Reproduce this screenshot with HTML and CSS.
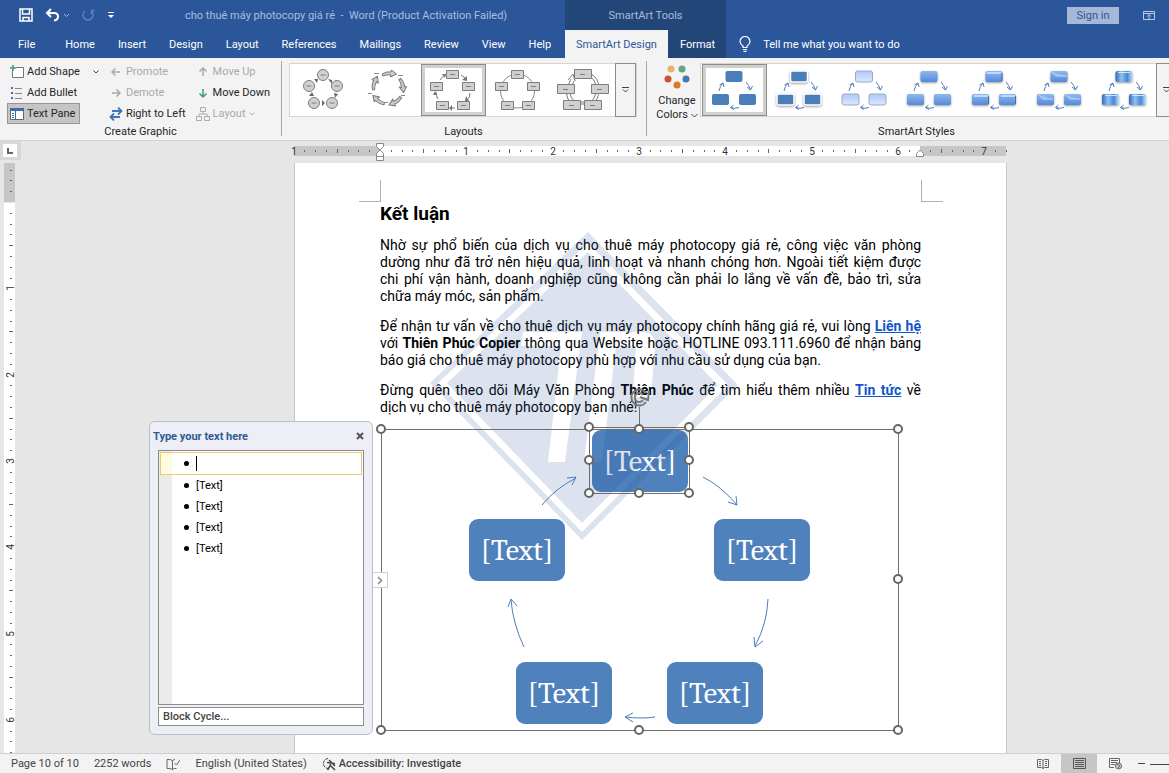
FILE: index.html
```html
<!DOCTYPE html>
<html lang="vi">
<head>
  <meta charset="UTF-8" />
  <meta name="viewport" content="width=device-width, initial-scale=1" />
  <title>cho thuê máy photocopy giá rẻ - Word</title>
  <link rel="stylesheet" href="styles.css">
</head>
<body>
  <!-- shared shapes -->
  <svg class="defs" width="0" height="0" aria-hidden="true">
    <defs>
      <linearGradient id="g-pale" x1="0" y1="0" x2="0" y2="1"><stop offset="0" stop-color="#aec8f8"/><stop offset="1" stop-color="#dde8fd"/></linearGradient>
      <linearGradient id="g-mid" x1="0" y1="0" x2="0" y2="1"><stop offset="0" stop-color="#8fb8f2"/><stop offset="1" stop-color="#5489d8"/></linearGradient>
      <linearGradient id="g-side" x1="0" y1="0" x2="1" y2="0"><stop offset="0" stop-color="#2f6cb8"/><stop offset=".35" stop-color="#8fc0f5"/><stop offset=".7" stop-color="#4a86d6"/><stop offset="1" stop-color="#bfe0fb"/></linearGradient>
      <g id="style-arrows" fill="none" stroke="#4c7db8" stroke-width="1">
        <path d="M17 26Q18 21 21 18M17.500 20l3.500-2 1 4"/>
        <path d="M44 17Q47 20 48.500 25M45 22l3.500 3 2-4"/>
        <path d="M37 42.500Q33 44 28.500 42.500M31.500 40l-3 2.500 3.500 2"/>
      </g>
      <g id="style-boxes">
        <rect x="23.500" y="6" width="17" height="11" rx="2"/>
        <rect x="10" y="29" width="17" height="11" rx="2"/>
        <rect x="37" y="29" width="17" height="11" rx="2"/>
      </g>
      <g id="cycle-boxes" fill="#d0d0d0" stroke="#7d7d7d">
        <path d="M25.500 5.500h12v8h-12zM9.500 17.500h12v8h-12zM41.500 17.500h12v8h-12zM15.500 36.500h12v8h-12zM36.500 36.500h12v8h-12z"/>
        <path d="M29 9.500h5M13 21.500h5M45 21.500h5M19 40.500h5M40 40.500h5"/>
      </g>
      <path id="block-arrow" d="M-7 1q5-3 9-2l.5-2 5 4-6 3 .5-2q-4-1-8 1z" fill="#ccc" stroke="#777"/>
    </defs>
  </svg>

  <header class="header">
    <div class="quick-access">
      <button class="icon-btn" aria-label="Save">
        <svg width="14" height="14" viewBox="0 0 14 14" fill="none" stroke="#fff" stroke-width="1.500"><path d="M1 1h12v12H1zM3.500 1v5h7V1M4 13V9.500h6V13"/></svg>
      </button>
      <button class="icon-btn" aria-label="Undo">
        <svg width="24" height="14" viewBox="0 0 24 14" fill="none" stroke="#fff"><path stroke-width="2" d="M6 1L2 5l4 4M2 5h7q4 0 4 3.500T9 12.500"/><path stroke="#9db3d8" d="M19 6l2.500 2.500L24 6"/></svg>
      </button>
      <button class="icon-btn" aria-label="Repeat" disabled>
        <svg width="14" height="14" viewBox="0 0 14 14" fill="none" stroke="#5d80b9" stroke-width="1.500"><path d="M4 3a5 5 0 1 0 6 0M10.500 6V2.500h3"/></svg>
      </button>
      <button class="icon-btn" aria-label="Customize Quick Access Toolbar">
        <svg width="8" height="8" viewBox="0 0 8 8" fill="#fff"><path d="M1 1h6v1H1zM1 4h6L4 7z"/></svg>
      </button>
      <span class="doc-title">cho thuê máy photocopy giá rẻ&nbsp; -&nbsp; Word (Product Activation Failed)</span>
    </div>
    <div class="context-title">SmartArt Tools</div>
    <div class="account">
      <button class="sign-in">Sign in</button>
      <button class="icon-btn" aria-label="Ribbon Display Options">
        <svg width="12" height="9" viewBox="0 0 12 9" fill="none" stroke="#b9c9e4"><path d="M.5.500h11v8H.5zM.5 2.500h11M6 8V4M4 5.500l2-2 2 2"/></svg>
      </button>
    </div>
    <nav class="tabs">
      <a class="tab tab-file" href="#">File</a>
      <a class="tab" href="#">Home</a>
      <a class="tab" href="#">Insert</a>
      <a class="tab" href="#">Design</a>
      <a class="tab" href="#">Layout</a>
      <a class="tab" href="#">References</a>
      <a class="tab" href="#">Mailings</a>
      <a class="tab" href="#">Review</a>
      <a class="tab" href="#">View</a>
      <a class="tab" href="#">Help</a>
    </nav>
    <nav class="tabs tabs-context">
      <a class="tab active" href="#">SmartArt Design</a>
      <a class="tab" href="#">Format</a>
    </nav>
    <a class="tell-me" href="#">
      <svg width="12" height="16" viewBox="0 0 12 16" fill="none" stroke="#fff" stroke-width="1.200"><path d="M4 11.500V10Q1 8 1 5.500a5 5 0 0 1 10 0Q11 8 8 10v1.500zM4 13.500h4M4.500 15.300h3"/></svg>
      Tell me what you want to do
    </a>
  </header>

  <section class="ribbon">
    <div class="group group-create">
      <div class="group-body commands">
        <div class="command-col">
          <button class="command">
            <svg width="14" height="14" viewBox="0 0 14 14" fill="none"><path d="M2.500 5v7.500h11v-10H6" fill="#fff" stroke="#777"/><path d="M3 0v6M0 3h6" stroke="#3f9c78" stroke-width="1.500"/></svg>
            Add Shape
            <svg class="drop" width="6" height="4" viewBox="0 0 6 4" fill="none" stroke="#444"><path d="M.5.500L3 3 5.500.500"/></svg>
          </button>
          <button class="command">
            <svg width="14" height="14" viewBox="0 0 14 14"><path fill="#41719c" d="M1 1h2v2H1zM1 6h2v2H1zM1 11h2v2H1z"/><path stroke="#888" d="M5 2.500h7M5 7.500h7M5 12.500h7"/></svg>
            Add Bullet
          </button>
          <button class="command pressed" aria-pressed="true">
            <svg width="14" height="14" viewBox="0 0 14 14"><path fill="#fff" stroke="#666" d="M.5 1.500h13v11H.5z"/><path fill="#3a6ea5" d="M0 1h14v3H0z"/><path stroke="#3a6ea5" d="M2 6.500h2M2 8.500h2M2 10.500h2M5.500 4v9"/></svg>
            Text Pane
          </button>
        </div>
        <div class="command-col">
          <button class="command" disabled><svg width="14" height="12" viewBox="0 0 14 12" fill="none" stroke="#aaa" stroke-width="1.500"><path d="M11 6H3M6.500 2.500L3 6l3.500 3.500"/></svg>Promote</button>
          <button class="command" disabled><svg width="14" height="12" viewBox="0 0 14 12" fill="none" stroke="#aaa" stroke-width="1.500"><path d="M3 6h8M7.500 2.500L11 6 7.500 9.500"/></svg>Demote</button>
          <button class="command"><svg width="14" height="14" viewBox="0 0 14 14" fill="none" stroke="#3d77b5" stroke-width="1.800"><path d="M3 4h9M9 .500L12.500 4 9 7.500M11 10H2M5 6.500L1.500 10 5 13.500"/></svg>Right to Left</button>
        </div>
        <div class="command-col">
          <button class="command" disabled><svg width="14" height="12" viewBox="0 0 14 12" fill="none" stroke="#aaa" stroke-width="1.500"><path d="M7 10V2.500M3.500 5.500L7 2l3.500 3.500"/></svg>Move Up</button>
          <button class="command"><svg width="14" height="12" viewBox="0 0 14 12" fill="none" stroke="#3f9c78" stroke-width="1.500"><path d="M7 2v7.500M3.500 6.500L7 10l3.500-3.500"/></svg>Move Down</button>
          <button class="command" disabled><svg width="14" height="14" viewBox="0 0 14 14" fill="none" stroke="#aaa"><path d="M4.500.500h5v4h-5zM.5 9.500h5v4h-5zM8.500 9.500h5v4h-5zM7 4.500V7M3 9.500V7h8v2.500"/></svg>Layout<svg width="6" height="4" viewBox="0 0 6 4" fill="none" stroke="#aaa"><path d="M.5.500L3 3 5.500.500"/></svg></button>
        </div>
      </div>
      <div class="group-label">Create Graphic</div>
    </div>

    <div class="group group-layouts">
      <div class="group-body">
        <div class="gallery">
          <button class="thumb" aria-label="Basic Cycle">
            <svg width="61" height="48" viewBox="2 1 61 48"><g fill="#d0d0d0" stroke="#7d7d7d"><circle cx="32" cy="10" r="5.500"/><circle cx="18" cy="21" r="5.500"/><circle cx="46" cy="21" r="5.500"/><circle cx="23" cy="38" r="5.500"/><circle cx="41" cy="38" r="5.500"/><path d="M29.500 10h5M15.500 21h5M43.500 21h5M20.500 38h5M38.500 38h5"/></g><path fill="#666" d="M23 14l4 0-1 4zM37 14l4 1 0 4zM43 28l4 1-3 4zM34 38l-3-3v6zM18 31l3-4 2 4z"/></svg>
          </button>
          <button class="thumb" aria-label="Text Cycle">
            <svg width="61" height="48" viewBox="2 1 61 48"><use href="#block-arrow" x="33" y="8"/><use href="#block-arrow" transform="translate(47 20) rotate(78)"/><use href="#block-arrow" transform="translate(40 37) rotate(150)"/><use href="#block-arrow" transform="translate(22 36) rotate(220)"/><use href="#block-arrow" transform="translate(18 18) rotate(290)"/><path d="M18 8.500h5M42 10.500h5M12 28.500h4M28 37.500h4M45 30.500h4" stroke="#888"/></svg>
          </button>
          <button class="thumb selected" aria-label="Block Cycle">
            <svg width="61" height="48" viewBox="2 1 61 48"><path d="M19 15q2-3 5-5M40 10q4 2 5 5M49 28q0 5-3 7M34 43h-5M17 34q-2-3-2-7" fill="none" stroke="#777"/><path fill="#777" d="M21 9h4l-1 4zM46 11l0 5-5-1zM48 36l-4 0 1-5zM28 43l3-3v6zM14 26l-2 4 4 0z"/><use href="#cycle-boxes"/></svg>
          </button>
          <button class="thumb" aria-label="Nondirectional Cycle">
            <svg width="61" height="48" viewBox="2 1 61 48"><circle cx="31.500" cy="26" r="17" fill="none" stroke="#888"/><use href="#cycle-boxes"/></svg>
          </button>
          <button class="thumb" aria-label="Continuous Cycle">
            <svg width="61" height="48" viewBox="2 1 61 48"><g fill="none" stroke="#777"><path d="M40 9q8 4 8 15 0 12-8 15H22q-8-4-6-16l4-9"/><path d="M40 12q5 4 5 12 0 11-7 13H25q-7-4-6-13l4-8M17 15l5-6 2 7"/></g><g fill="#d0d0d0" stroke="#7d7d7d"><path d="M23.500 4.500h17v9h-17zM6.500 19.500h17v9h-17zM40.500 19.500h17v9h-17zM12.500 35.500h17v9h-17zM33.500 35.500h17v9h-17z"/><path d="M29 9.500h5M12 24.500h5M46 24.500h5M18 40.500h5M39 40.500h5"/></g></svg>
          </button>
          <button class="gallery-more" aria-label="More layouts"><svg width="7" height="6" viewBox="0 0 7 6" fill="none" stroke="#444"><path d="M0 .5h7M1 2.500L3.500 5 6 2.500"/></svg></button>
        </div>
      </div>
      <div class="group-label">Layouts</div>
    </div>

    <div class="group group-styles">
      <div class="group-body">
        <button class="change-colors">
          <svg width="26" height="24" viewBox="0 0 26 24"><circle cx="7" cy="4" r="3.500" fill="#e8b36b"/><circle cx="18" cy="4" r="3.500" fill="#62a588"/><circle cx="4" cy="14" r="3.500" fill="#cf5135"/><circle cx="22" cy="14" r="3.500" fill="#4478b0"/><circle cx="13" cy="20" r="3.500" fill="#e0761d"/></svg>
          <span>Change<br>Colors <svg width="7" height="5" viewBox="0 0 7 5" fill="none" stroke="#444"><path d="M.5 1L3.500 4l3-3"/></svg></span>
        </button>
        <div class="gallery">
          <button class="thumb selected" aria-label="Simple Fill"><svg width="61" height="48" viewBox="2 1 61 48"><use href="#style-boxes" fill="#4a7ebb"/><use href="#style-arrows"/></svg></button>
          <button class="thumb" aria-label="White Outline"><svg width="61" height="48" viewBox="2 1 61 48"><use class="shadowed" href="#style-boxes" fill="#4a7ebb" stroke="#fff" stroke-width="1.500"/><use href="#style-arrows"/></svg></button>
          <button class="thumb" aria-label="Subtle Effect"><svg width="61" height="48" viewBox="2 1 61 48"><use href="#style-boxes" fill="url(#g-pale)" stroke="#9aa7c9"/><use href="#style-arrows"/></svg></button>
          <button class="thumb" aria-label="Moderate Effect"><svg width="61" height="48" viewBox="2 1 61 48"><use class="shadowed" href="#style-boxes" fill="url(#g-mid)"/><use href="#style-arrows"/></svg></button>
          <button class="thumb" aria-label="Intense Effect"><svg width="61" height="48" viewBox="2 1 61 48"><use class="shadowed" href="#style-boxes" fill="url(#g-mid)"/><path d="M25 8h14M12 31h14M39 31h14" stroke="#b8dcfb" stroke-width="2"/><path d="M40 8v8M26.500 31v8M53.500 31v8" stroke="#3c70bb"/><use href="#style-arrows"/></svg></button>
          <button class="thumb" aria-label="Polished"><svg width="61" height="48" viewBox="2 1 61 48"><use class="shadowed" href="#style-boxes" fill="url(#g-mid)"/><path d="M25 7l4 4h11M12 30l4 4h10M39 30l4 4h10" fill="#bfe0fb" fill-opacity=".4" stroke="#b5d8fa"/><use href="#style-arrows"/></svg></button>
          <button class="thumb" aria-label="Inset"><svg width="61" height="48" viewBox="2 1 61 48"><use class="shadowed" href="#style-boxes" fill="url(#g-side)"/><path d="M26 7.500h12M13 30.500h12M40 30.500h12" stroke="#cfe7fc"/><use href="#style-arrows"/></svg></button>
          <button class="gallery-more" aria-label="More styles"><svg width="7" height="6" viewBox="0 0 7 6" fill="none" stroke="#444"><path d="M0 .5h7M1 2.500L3.500 5 6 2.500"/></svg></button>
        </div>
      </div>
      <div class="group-label">SmartArt Styles</div>
    </div>
  </section>

  <main class="workspace">
    <div class="corner"><button class="tab-stop" aria-label="Left tab"><svg width="6" height="6" viewBox="0 0 6 6" fill="none" stroke="#666" stroke-width="2"><path d="M1 0v5h5"/></svg></button></div>
    <div class="ruler-row">
      <svg class="ruler-h" id="ruler-h" width="712" height="20" viewBox="0 0 712 20"></svg>
    </div>
    <svg class="ruler-v" id="ruler-v" width="20" height="591"></svg>

    <div class="canvas">
      <article class="page">
        <span class="crop-mark crop-left"></span>
        <span class="crop-mark crop-right"></span>
        <h2>Kết luận</h2>
        <p>Nhờ sự phổ biến của dịch vụ cho thuê máy photocopy giá rẻ, công việc văn phòng dường như đã trở nên hiệu quả, linh hoạt và nhanh chóng hơn. Ngoài tiết kiệm được chi&nbsp;phí vận hành, doanh nghiệp cũng không cần phải lo lắng về vấn đề, bảo trì, sửa chữa&nbsp;máy móc, sản phẩm.</p>
        <p>Để nhận tư vấn về cho thuê dịch vụ máy photocopy chính hãng giá rẻ, vui lòng <a href="#">Liên hệ</a> với <b>Thiên Phúc Copier</b> thông qua Website hoặc HOTLINE 093.111.6960 để nhận bảng báo giá cho thuê máy photocopy phù hợp với nhu cầu sử dụng của bạn.</p>
        <p>Đừng quên theo dõi Máy Văn Phòng <b>Thiên Phúc</b> để tìm hiểu thêm nhiều <a href="#">Tin tức</a> về dịch&nbsp;vụ cho thuê máy photocopy bạn nhé!</p>

        <div class="smartart">
          <div class="node node-1">[Text]</div>
          <div class="node node-2">[Text]</div>
          <div class="node node-3">[Text]</div>
          <div class="node node-4">[Text]</div>
          <div class="node node-5">[Text]</div>

          <svg class="watermark" width="308" height="308" viewBox="0 0 308 308" aria-hidden="true">
            <path class="tint" fill-rule="evenodd" d="M158 0L308 153 152 308 0 151zM158 11L8 151 152 300 298 153z"/>
            <path class="tint" fill-rule="evenodd" d="M158 20L17 151 152 291 288 153zM93 100H152L135 230H118L131 114H91zM170 100H212Q226 100 225 114L221 165H203L206 114H186L172 230H154z"/>
          </svg>

          <svg class="overlay" width="518" height="302" viewBox="0 0 518 302">
            <g class="arrow">
              <path d="M322 48Q340 57 356 76M347 73l9 3-1-9"/>
              <path d="M387 170Q386 195 374 217M373 208l1 10 8-6"/>
              <path d="M274 288Q262 290 244 288M252 284l-8 4 8 5"/>
              <path d="M143 218Q132 195 130 171M127 178l3-8 6 7"/>
              <path d="M161 76Q175 59 195 49M186 49l9-1-4 8"/>
            </g>
            <path class="frame" d="M.5.500h517v301H.5z"/>
            <path class="frame" d="M208.500-1.500h100v66h-100zM258.500-2v-20"/>
            <g class="rotate"><path d="M265-27a8 8 0 1 1 0-9M268-38l-1 9-8-3"/><path d="M262-29a4.500 4.500 0 1 1 0-5"/></g>
            <g class="handle">
              <circle cx="0" cy="0" r="4"/><circle cx="517" cy="0" r="4"/>
              <circle cx="517" cy="150" r="4"/><circle cx="517" cy="301" r="4"/>
              <circle cx="258" cy="301" r="4"/><circle cx="0" cy="301" r="4"/>
              <circle cx="208" cy="-2" r="4"/><circle cx="258" cy="0" r="4"/><circle cx="308" cy="-2" r="4"/>
              <circle cx="208" cy="31" r="4"/><circle cx="308" cy="31" r="4"/>
              <circle cx="208" cy="64" r="4"/><circle cx="258" cy="64" r="4"/><circle cx="308" cy="64" r="4"/>
            </g>
          </svg>

          <button class="pane-toggle" aria-label="Toggle text pane"><svg width="6" height="9" viewBox="0 0 6 9" fill="none" stroke="#888" stroke-width="1.500"><path d="M1 1l3.500 3.500L1 8"/></svg></button>

          <aside class="text-pane">
            <div class="pane-head">
              <strong>Type your text here</strong>
              <button class="icon-btn" aria-label="Close"><svg width="8" height="8" viewBox="0 0 8 8" stroke="#555" stroke-width="2"><path d="M1 1l6 6M7 1L1 7"/></svg></button>
            </div>
            <ul class="pane-list">
              <li class="current"><input class="caret" type="text" value="" aria-label="Item 1"></li>
              <li><input type="text" value="[Text]" aria-label="Item 2"></li>
              <li><input type="text" value="[Text]" aria-label="Item 3"></li>
              <li><input type="text" value="[Text]" aria-label="Item 4"></li>
              <li><input type="text" value="[Text]" aria-label="Item 5"></li>
            </ul>
            <button class="pane-foot">Block Cycle...</button>
          </aside>
        </div>
      </article>
    </div>
  </main>

  <footer class="status">
    <span>Page 10 of 10</span>
    <span>2252 words</span>
    <svg width="14" height="12" viewBox="0 0 14 12" fill="none" stroke="#666"><path d="M6.500 2.500v9M6.500 2.500Q4 1 1 1.500v9q3-.5 5.500 1 2-1.500 4-1M6.500 2.500Q8 1.500 9 1.500M8.500 5l2 2L14 2"/></svg>
    <span>English (United States)</span>
    <span class="accessibility">
      <svg width="14" height="14" viewBox="0 0 14 14" fill="none" stroke="#444"><path d="M6 1.500a5 5 0 1 0 1 10" stroke-dasharray="3 1"/><path d="M5 5.500l8 1M9 6l-1 3-2.500 4M9 9l4 4M7 3l6 6" stroke-width="1.500"/></svg>
      Accessibility: Investigate
    </span>
    <div class="views">
      <button class="view" aria-label="Read Mode"><svg width="12" height="11" viewBox="0 0 12 11" fill="none" stroke="#666"><path d="M.5 1.500h4L6 2.500l1.500-1h4v8h-4L6 10.500l-1.500-1h-4zM6 2.500v8M2 3.500h2M2 5.500h2M2 7.500h2M8 3.500h2M8 5.500h2M8 7.500h2"/></svg></button>
      <button class="view active" aria-label="Print Layout"><svg width="13" height="11" viewBox="0 0 13 11" fill="none" stroke="#555"><path d="M.5.500h12v10H.5zM2 2.500h9M2 4.500h9M2 6.500h9M2 8.500h9"/></svg></button>
      <button class="view" aria-label="Web Layout"><svg width="13" height="12" viewBox="0 0 13 12" fill="none" stroke="#666"><path d="M5 9.500H.5v-9h10V5M2 2.500h7M2 4.500h6M2 6.500h4"/><circle cx="9.500" cy="8" r="3" fill="#ccc"/><path d="M8 6l3 2-2 2"/></svg></button>
      <svg class="zoom-line" width="32" height="10" viewBox="0 0 32 10" stroke="#444"><path d="M1 4.500h7M13 5.500h19"/></svg>
    </div>
  </footer>
  <script src="rulers.js"></script>
</body>
</html>
```
FILE: rulers.js
```js
// Builds the tick marks and numbers on both rulers
(() => {
  const inch = 86.3;

  function ticks(from, to, origin, draw) {
    const first = Math.ceil((from - origin) / inch * 8);
    for (let i = first; origin + i * inch / 8 < to; i++) {
      if (i !== 0) draw(Math.round(origin + i * inch / 8), i);
    }
  }

  let h = '<rect class="margin" x="0" y="5" width="712" height="10"/><rect class="area" x="86" y="5" width="540" height="10"/>';
  ticks(-2, 712, 86, (x, i) => {
    if (i % 8 === 0) h += `<text x="${x}" y="14">${Math.abs(i / 8)}</text>`;
    else if (i % 4 === 0) h += `<rect x="${x}" y="8" width="1" height="4"/>`;
    else h += `<rect x="${x}" y="9" width="1" height="2"/>`;
  });
  h += '<path class="marker" d="M82.500 2.500h7v3L82.500 12.500v3h7v-3L82.500 5.500zM82.500 15.500h7v4h-7zM622.500 15.500v-3l3.500-3.500 3.500 3.500v3z"/>';
  document.getElementById('ruler-h').innerHTML = h;

  let v = '<rect class="margin" x="4" y="0" width="11" height="39"/><rect class="area" x="4" y="40" width="11" height="2000"/>';
  ticks(4, 591, 39, (y, i) => {
    if (i % 8 === 0) v += `<text x="0" y="0" transform="translate(14 ${y}) rotate(-90)">${i / 8}</text>`;
    else if (i % 4 === 0) v += `<rect x="9" y="${y}" width="4" height="1"/>`;
    else v += `<rect x="10" y="${y}" width="2" height="1"/>`;
  });
  document.getElementById('ruler-v').innerHTML = v;
})();
```
FILE: styles.css
```css
* {
  margin: 0;
  padding: 0;
  box-sizing: border-box;
}

html, body {
  height: 100%;
  overflow: hidden;
}

body {
  display: flex;
  flex-direction: column;
  font-family: Roboto, 'Noto Sans', sans-serif;
  font-size: 11px;
  color: #262626;
  background: #e6e6e6;
}

button, input {
  font: inherit;
  color: inherit;
  border: 0;
  background: none;
}

a {
  color: inherit;
  text-decoration: none;
}

svg {
  display: block;
  flex: none;
}

.defs {
  position: absolute;
}

.icon-btn {
  display: flex;
}

/* title bar + tabs */
.header {
  display: grid;
  grid-template-columns: 565px auto 1fr;
  grid-template-rows: 30px 28px;
  background: #2b579a;
  color: #fff;
}

.quick-access {
  display: flex;
  align-items: center;
  gap: 12px;
  padding-left: 19px;
}

.doc-title {
  margin-left: 58px;
  color: #a9bddd;
  white-space: nowrap;
}

.context-title {
  display: flex;
  align-items: center;
  justify-content: center;
  background: #234679;
  color: #a9bddd;
}

.account {
  display: flex;
  align-items: center;
  justify-content: flex-end;
  gap: 24px;
  padding-right: 14px;
}

.sign-in {
  width: 52px;
  height: 17px;
  background: #a6b8d5;
  color: #2b579a;
}

.tabs {
  display: flex;
}

.tab {
  display: flex;
  align-items: center;
  padding: 0 11px 0 12px;
  white-space: nowrap;
}

.tab-file {
  padding: 0 18px;
}

.tabs-context {
  background: #234679;
}

.tab.active {
  padding: 0 11px;
  background: #f3f3f3;
  color: #2b579a;
}

.tell-me {
  display: flex;
  align-items: center;
  gap: 12px;
  padding-left: 13px;
}

/* ribbon */
.ribbon {
  display: flex;
  flex: none;
  height: 83px;
  background: #f3f3f3;
  border-bottom: 1px solid #d2d2d2;
  overflow: hidden;
}

.group {
  display: flex;
  flex-direction: column;
  flex: none;
  position: relative;
  padding-top: 3px;
}

.group + .group::before {
  content: '';
  position: absolute;
  left: 0;
  top: 3px;
  bottom: 4px;
  width: 1px;
  background: #a8a8a8;
}

.group-create { width: 281px; }
.group-layouts { width: 365px; }
.group-styles { width: 541px; }

.group-body {
  display: flex;
  height: 64px;
  padding: 2px 0 0 8px;
}

.group-label {
  line-height: 16px;
  text-align: center;
}

.commands {
  gap: 4px;
  padding: 0 0 0 7px;
}

.command-col {
  display: flex;
  flex-direction: column;
  align-items: flex-start;
}

.command {
  display: flex;
  align-items: center;
  gap: 3px;
  height: 21px;
  padding: 0 3px;
  white-space: nowrap;
}

.command:disabled {
  color: #aaa;
}

.command.pressed {
  padding: 0 4px 0 2px;
  background: #c5c5c5;
  border: 1px solid #969696;
}

.drop {
  margin-left: 10px;
}

.gallery {
  display: flex;
  height: 54px;
  padding: 0 1px;
  border: 1px solid #d5d5d5;
  background: #fff;
}

.thumb {
  display: flex;
  align-items: center;
  justify-content: center;
  width: 65px;
  height: 52px;
}

.thumb.selected {
  border: 1px solid #8c8c8c;
  box-shadow: inset 0 0 0 3px #d0d0cc;
}

.thumb svg {
  overflow: visible;
}

.shadowed {
  filter: drop-shadow(0 1px 1px rgba(0, 0, 0, .4));
}

.gallery-more {
  display: flex;
  align-items: center;
  justify-content: center;
  width: 21px;
  height: 54px;
  margin: -1px;
  background: #f3f3f3;
  border: 1px solid #8c8c8c;
}

.change-colors {
  display: flex;
  flex-direction: column;
  align-items: center;
  width: 46px;
  line-height: 14px;
  padding-top: 2px;
}

.change-colors span {
  margin-top: 5px;
}

.change-colors span svg {
  display: inline;
}

/* document area */
.workspace {
  flex: 1;
  min-height: 0;
  display: grid;
  grid-template-columns: 21px 1fr;
  grid-template-rows: 22px 1fr;
  overflow: hidden;
}

.corner {
  height: 19px;
  padding: 3px;
  background: #d8d8d8;
}

.tab-stop {
  display: flex;
  align-items: center;
  justify-content: center;
  width: 14px;
  height: 13px;
  background: #fff;
}

.ruler-row {
  padding-left: 273px;
}

.ruler-h,
.ruler-v {
  overflow: visible;
  fill: #666;
}

.ruler-h text,
.ruler-v text {
  font-size: 10px;
  text-anchor: middle;
  fill: #333;
}

.margin {
  fill: #c6c6c6;
}

.area {
  fill: #fff;
}

.marker {
  fill: #fff;
  stroke: #888;
}

.ruler-v {
  height: 100%;
}

.canvas {
  padding-left: 273px;
}

.page {
  position: relative;
  width: 713px;
  height: 100%;
  padding: 39px 85px 0;
  background: #fff;
  border: 1px solid #c6c6c6;
  border-width: 0 1px;
  font-family: Roboto, sans-serif;
  font-size: 14px;
  line-height: 17px;
  color: #000;
}

.page h2 {
  font-size: 19px;
  line-height: 23px;
  margin-bottom: 12px;
}

.page p {
  margin-bottom: 13px;
  text-align: justify;
}

.page p a {
  color: #1155cc;
  font-weight: bold;
  text-decoration: underline;
}

.crop-mark {
  position: absolute;
  top: 17px;
  width: 22px;
  height: 22px;
  border-bottom: 1px solid #b0b0b0;
}

.crop-left {
  left: 64px;
  border-right: 1px solid #b0b0b0;
}

.crop-right {
  right: 63px;
  border-left: 1px solid #b0b0b0;
}

/* SmartArt drawing */
.smartart {
  position: relative;
  width: 518px;
  height: 302px;
  margin-left: 1px;
}

.node {
  position: absolute;
  display: flex;
  align-items: center;
  justify-content: center;
  width: 96px;
  height: 62px;
  border-radius: 9px;
  background: #4f81bd;
  color: #fff;
  font-family: Cambria, Caladea, 'Liberation Serif', serif;
  font-size: 30px;
}

.node-1 { left: 211px; top: 1px; }
.node-2 { left: 333px; top: 90px; }
.node-3 { left: 286px; top: 233px; }
.node-4 { left: 135px; top: 233px; }
.node-5 { left: 88px; top: 90px; }

.watermark {
  position: absolute;
  left: 49px;
  top: -197px;
  pointer-events: none;
}

.tint {
  fill: #24509b;
  fill-opacity: .16;
}

.overlay {
  position: absolute;
  left: 0;
  top: 0;
  overflow: visible;
  fill: none;
}

.arrow {
  stroke: #4a7ebb;
}

.frame {
  stroke: #6e6e6e;
}

.handle {
  fill: #fff;
  stroke: #666;
  stroke-width: 2;
}

.rotate {
  stroke: #777;
  stroke-width: 2;
}

.pane-toggle {
  position: absolute;
  left: -9px;
  top: 143px;
  display: flex;
  align-items: center;
  justify-content: center;
  width: 16px;
  height: 16px;
  background: #fff;
  border: 1px solid #d0d0d0;
}

.text-pane {
  position: absolute;
  right: 526px;
  top: -8px;
  display: flex;
  flex-direction: column;
  width: 224px;
  height: 314px;
  padding: 0 8px 8px;
  background: #eeeef6;
  border: 1px solid #b4c2c8;
  border-radius: 6px;
  font-size: 11px;
}

.pane-head {
  display: flex;
  align-items: center;
  justify-content: space-between;
  height: 28px;
  margin-left: -5px;
  color: #2f5a93;
}

.pane-list {
  flex: 1;
  list-style: none;
  padding: 1px;
  background: linear-gradient(to right, #ebebeb 13px, #fff 13px);
  border: 1px solid #8c8c8c;
}

.pane-list li {
  display: flex;
  align-items: center;
  height: 21px;
  padding-left: 24px;
}

.pane-list li::before {
  content: '';
  width: 5px;
  height: 5px;
  margin-right: 7px;
  border-radius: 50%;
  background: #000;
}

.pane-list .current {
  height: 23px;
  padding-left: 23px;
  background: linear-gradient(to right, #fffbe0 11px, #fff 11px);
  border: 1px solid #f0c878;
}

.pane-list input {
  flex: 1;
  min-width: 0;
  height: 15px;
}

.pane-list .caret {
  border-left: 1px solid #000;
}

.pane-foot {
  height: 19px;
  margin-top: 2px;
  padding-left: 4px;
  background: #fff;
  border: 1px solid #8c8c8c;
  font-weight: 500;
  text-align: left;
  color: #444;
}

/* status bar */
.status {
  display: flex;
  align-items: center;
  gap: 15px;
  flex: none;
  height: 20px;
  padding-left: 11px;
  background: #f3f3f3;
  border-top: 1px solid #cfcfcf;
  color: #444;
  white-space: nowrap;
}

.accessibility {
  display: flex;
  align-items: center;
  gap: 3px;
  font-weight: 500;
}

.views {
  display: flex;
  align-items: center;
  align-self: stretch;
  margin-left: auto;
}

.view {
  display: flex;
  align-items: center;
  justify-content: center;
  align-self: stretch;
  width: 36px;
}

.view.active {
  background: #c6c6c6;
}

.zoom-line {
  margin-left: 4px;
}
```
